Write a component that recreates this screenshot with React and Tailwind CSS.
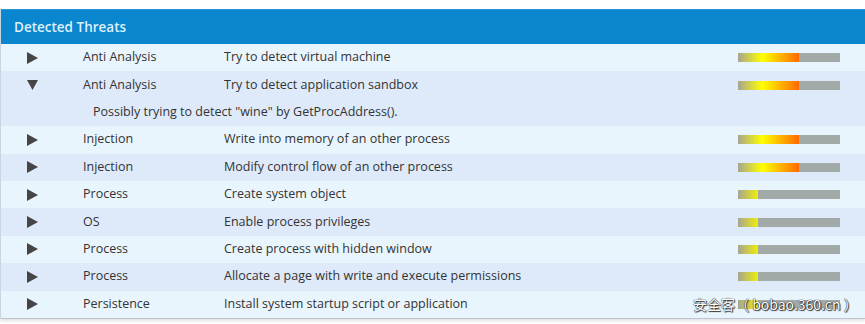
import React from 'react';

const threats = [
    { category: 'Anti Analysis', text: 'Try to detect virtual machine', level: 'high' },
    { category: 'Anti Analysis', text: 'Try to detect application sandbox', level: 'high', open: true, detail: 'Possibly trying to detect "wine" by GetProcAddress().' },
    { category: 'Injection', text: 'Write into memory of an other process', level: 'high' },
    { category: 'Injection', text: 'Modify control flow of an other process', level: 'high' },
    { category: 'Process', text: 'Create system object', level: 'low' },
    { category: 'OS', text: 'Enable process privileges', level: 'low' },
    { category: 'Process', text: 'Create process with hidden window', level: 'low' },
    { category: 'Process', text: 'Allocate a page with write and execute permissions', level: 'low' },
    { category: 'Persistence', text: 'Install system startup script or application', level: 'low' },
];

const Arrow = ({ open }) => (
    <svg width="11" height="12" viewBox="0 0 11 12" className="shrink-0">
        {open
            ? <polygon points="0,1 11,1 5.5,11" fill="#454545" />
            : <polygon points="0,0 11,6 0,12" fill="#454545" />}
    </svg>
);

const Bar = ({ level }) => (
    <div className="flex h-[9px] w-[102px] bg-[#a2aaa7]">
        {level === 'high'
            ? <div className="h-full w-[61px] bg-[linear-gradient(to_right,#a6a592,#ffff00_40%,#ffb400_70%,#ff6a00)]" />
            : <div className="h-full w-[20px] bg-[linear-gradient(to_right,#a6a592,#eeee0a)]" />}
    </div>
);

const App = () => {
    return (
        <div className="h-[324px] w-[865px] bg-white pt-[9px] text-[12.5px] text-[#333] [font-family:'Open_Sans','Noto_Sans',sans-serif] relative">
            <div className="border-l border-[#c9d6e2] shadow-[0_2px_3px_rgba(0,0,0,0.12)]">
                <div className="flex h-[35px] items-center bg-[#0a86cf] pl-[13px] text-[13.5px] font-semibold text-[#dcf0fc] border-t border-[#2f97d6]">
                    Detected Threats
                </div>
                <div className="border-b border-[#b9c6d2]">
                    {threats.map((t, i) => (
                        <div key={i} className={i % 2 === 0 ? 'bg-[#e9f5fd]' : 'bg-[#deeafa]'}>
                            <div className="flex h-[27.4px] items-center">
                                <div className="flex w-[82px] pl-[26px]">
                                    <Arrow open={t.open} />
                                </div>
                                <div className="w-[141px]">{t.category}</div>
                                <div className="flex-1">{t.text}</div>
                                <div className="w-[127px]">
                                    <Bar level={t.level} />
                                </div>
                            </div>
                            {t.detail && (
                                <div className="flex h-[27.4px] items-center pl-[92px]">{t.detail}</div>
                            )}
                        </div>
                    ))}
                </div>
            </div>
            <div className="absolute left-[693px] top-[294px] text-[14px] text-white [font-family:'Noto_Sans_CJK_SC',sans-serif] [text-shadow:0_0_1px_#222,0_0_1px_#222,1px_1px_1px_#333]">
                安全客（ bobao.360.cn ）
            </div>
        </div>
    );
};

export default App;
